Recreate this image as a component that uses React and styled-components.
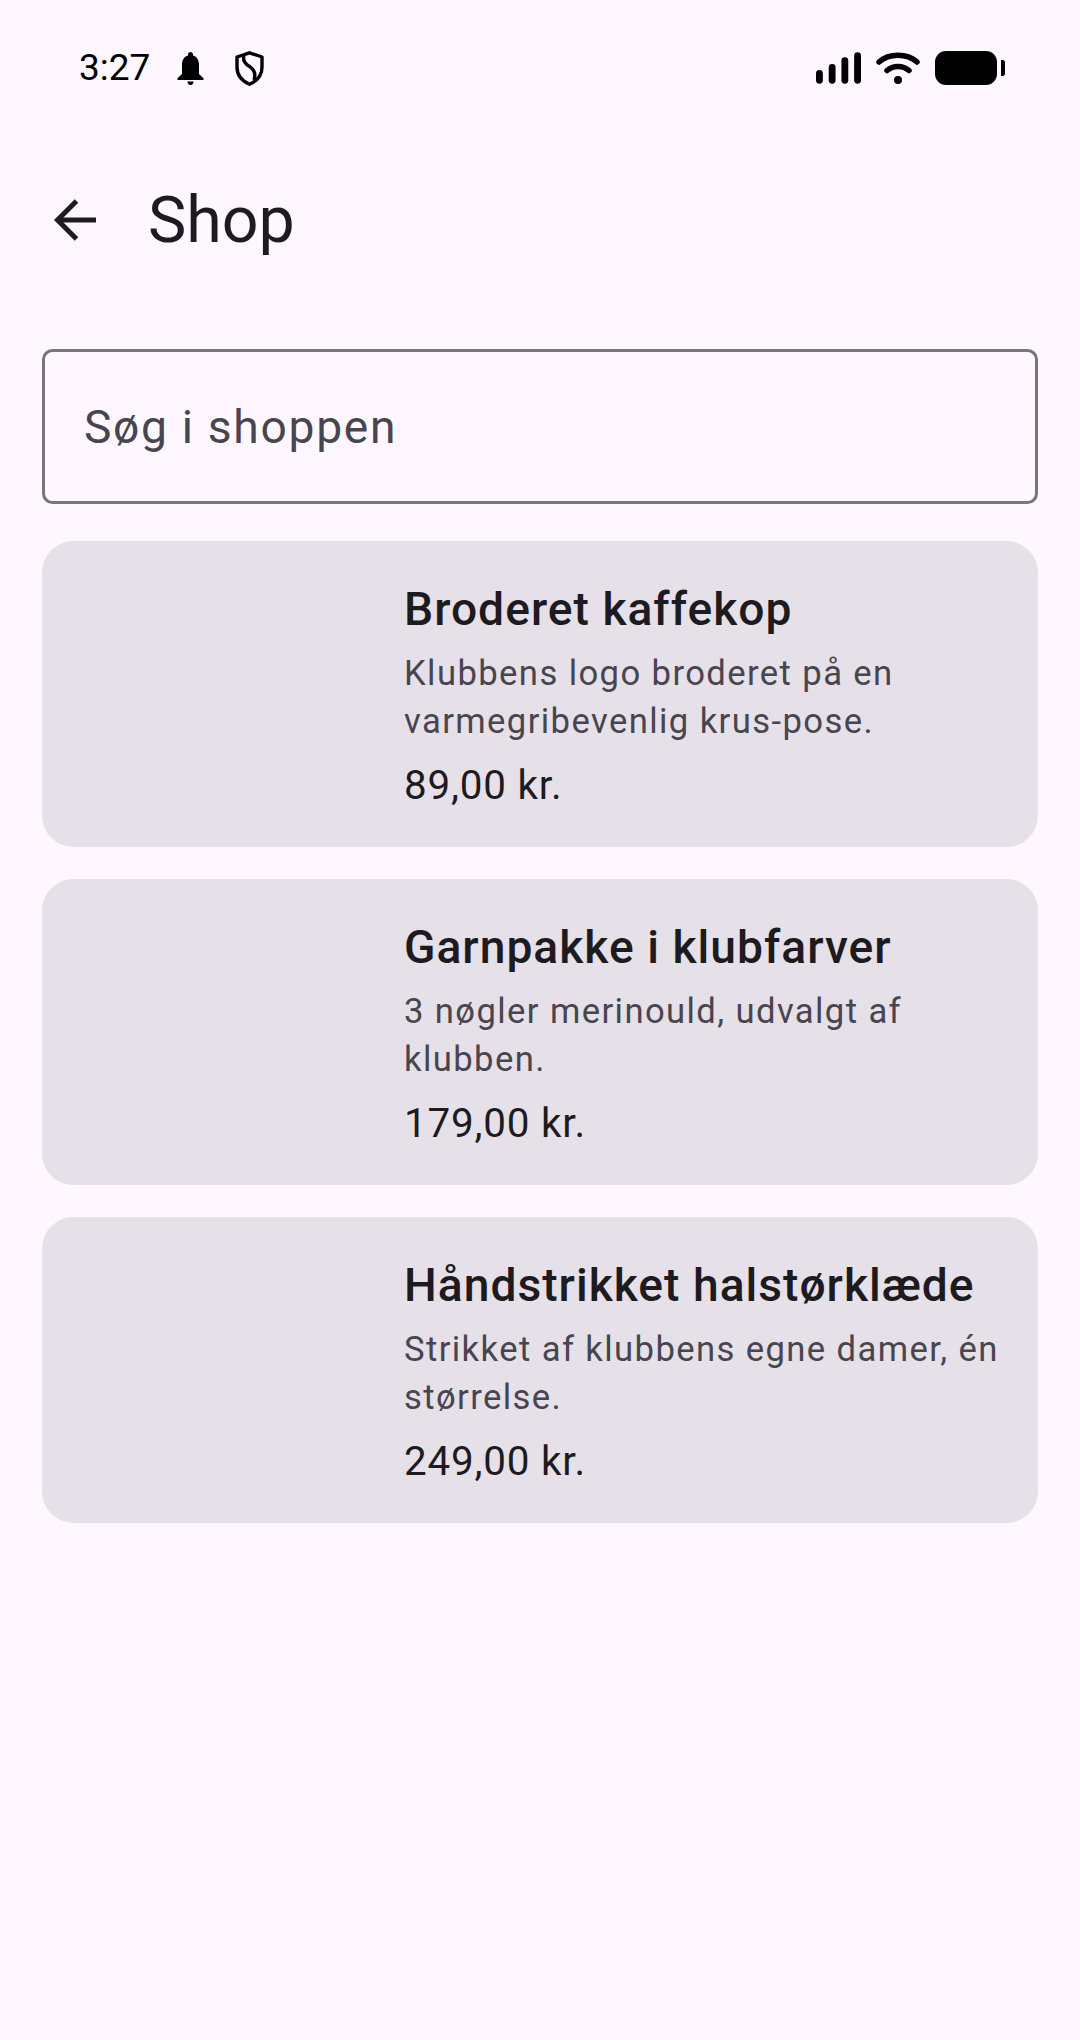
import React from "react";
import styled, { createGlobalStyle } from "styled-components";

const GlobalStyle = createGlobalStyle`
  html, body {
    margin: 0;
    padding: 0;
    background: #fef7ff;
  }
  * {
    box-sizing: border-box;
  }
`;

const Screen = styled.div`
  width: 1080px;
  height: 2040px;
  background: #fef7ff;
  color: #1d1b20;
  font-family: Roboto, "Noto Sans", sans-serif;
  overflow: hidden;
`;

const StatusBar = styled.div`
  height: 136px;
  padding: 0 75px 0 79px;
  display: flex;
  align-items: center;
  justify-content: space-between;
`;

const StatusGroup = styled.div`
  display: flex;
  align-items: center;
  gap: ${(p) => p.$gap || 0}px;
`;

const Clock = styled.span`
  font-size: 37px;
  line-height: 44px;
  color: #000;
  margin-right: -4px;
`;

const TopBar = styled.div`
  height: 168px;
  display: flex;
  align-items: center;
  padding-left: 54px;
`;

const BackButton = styled.button`
  border: 0;
  padding: 0;
  background: none;
  display: flex;
  margin-right: 52px;
`;

const Title = styled.h1`
  margin: 0;
  font-size: 64.5px;
  font-weight: 400;
  line-height: 80px;
`;

const Content = styled.div`
  padding: 45px 42px 0;
  display: flex;
  flex-direction: column;
  gap: 32px;
`;

const SearchField = styled.div`
  height: 155px;
  margin-bottom: 5px;
  border: 3px solid #79747e;
  border-radius: 10.5px;
  padding: 0 39px;
  display: flex;
  align-items: center;
  font-size: 46.2px;
  letter-spacing: 1.69px;
  color: #49454f;
`;

const Card = styled.div`
  height: 306px;
  background: #e6e0e9;
  border-radius: 31.5px;
  padding: 37px 0 0 362px;
`;

const CardTitle = styled.div`
  font-size: 46.2px;
  font-weight: 500;
  letter-spacing: 1px;
  line-height: 63px;
  white-space: nowrap;
`;

const CardText = styled.div`
  font-size: 34.65px;
  letter-spacing: 1.39px;
  line-height: 48px;
  color: #49454f;
  width: 625px;
  margin-top: 8px;
`;

const Price = styled.div`
  font-size: 40.4px;
  letter-spacing: 0.8px;
  line-height: 58px;
  margin-top: 12px;
`;

const products = [
  {
    name: "Broderet kaffekop",
    text: "Klubbens logo broderet på en varmegribevenlig krus-pose.",
    price: "89,00 kr.",
  },
  {
    name: "Garnpakke i klubfarver",
    text: "3 nøgler merinould, udvalgt af klubben.",
    price: "179,00 kr.",
  },
  {
    name: "Håndstrikket halstørklæde",
    text: "Strikket af klubbens egne damer, én størrelse.",
    price: "249,00 kr.",
  },
];

const BellIcon = () => (
  <svg width="27" height="33" viewBox="0 0 27 33" fill="#000">
    <path d="M13.500 0c1.500 0 2.500 1.100 2.500 2.600v1c4.200 1.100 6 4.800 6 9.400v9l4.500 4.200V28H.5v-1.800L5 22v-9c0-4.600 1.800-8.300 6-9.400v-1C11 1.100 12 0 13.500 0z" />
    <path d="M10.500 29.500h6c0 2-1.200 3.500-3 3.500s-3-1.500-3-3.500z" />
  </svg>
);

const ShieldIcon = () => (
  <svg width="29" height="35" viewBox="0 0 29 35" fill="none" stroke="#000" strokeWidth="3.400">
    <path d="M14.500 1.800 L27 6 V16 C27 24 22 30 14.500 33.200 C7 30 2 24 2 16 V6 Z" strokeLinejoin="round" />
    <path d="M9 4 C7.500 9 9.500 12.500 14.500 15.500 C20 19 21 23 19 29" />
  </svg>
);

const SignalIcon = () => (
  <svg width="45" height="32" viewBox="0 0 46 32" fill="#000">
    <rect x="0" y="18" width="7" height="14" rx="3.500" />
    <rect x="13" y="12" width="7" height="20" rx="3.500" />
    <rect x="26" y="5" width="7" height="27" rx="3.500" />
    <rect x="39" y="0" width="7" height="32" rx="3.500" />
  </svg>
);

const WifiIcon = () => (
  <svg width="44" height="32" viewBox="0 0 44 32" fill="none" stroke="#000" strokeWidth="5.500" strokeLinecap="round">
    <path d="M3 10 C13 1 31 1 41 10" />
    <path d="M11 18.500 C17 13 27 13 33 18.500" />
    <circle cx="22" cy="28" r="4" fill="#000" stroke="none" />
  </svg>
);

const BatteryIcon = () => (
  <svg width="70" height="34" viewBox="0 0 70 34" fill="#000">
    <rect x="0" y="0" width="62" height="34" rx="11" />
    <path d="M66 9h1.500c1.500 0 2.500 1 2.500 2.500v11c0 1.500-1 2.500-2.500 2.500H66z" />
  </svg>
);

const BackIcon = () => (
  <svg width="42" height="42" viewBox="0 0 42 42" fill="none" stroke="#1d1b20" strokeWidth="5">
    <path d="M42 21H4" />
    <path d="M22.500 2 L3.500 21 L22.500 40" />
  </svg>
);

export default function App() {
  return (
    <Screen>
      <GlobalStyle />
      <StatusBar>
        <StatusGroup $gap={31}>
          <Clock>3:27</Clock>
          <BellIcon />
          <ShieldIcon />
        </StatusGroup>
        <StatusGroup $gap={15}>
          <SignalIcon />
          <WifiIcon />
          <BatteryIcon />
        </StatusGroup>
      </StatusBar>
      <TopBar>
        <BackButton aria-label="Tilbage">
          <BackIcon />
        </BackButton>
        <Title>Shop</Title>
      </TopBar>
      <Content>
        <SearchField>Søg i shoppen</SearchField>
        {products.map((product) => (
          <Card key={product.name}>
            <CardTitle>{product.name}</CardTitle>
            <CardText>{product.text}</CardText>
            <Price>{product.price}</Price>
          </Card>
        ))}
      </Content>
    </Screen>
  );
}
